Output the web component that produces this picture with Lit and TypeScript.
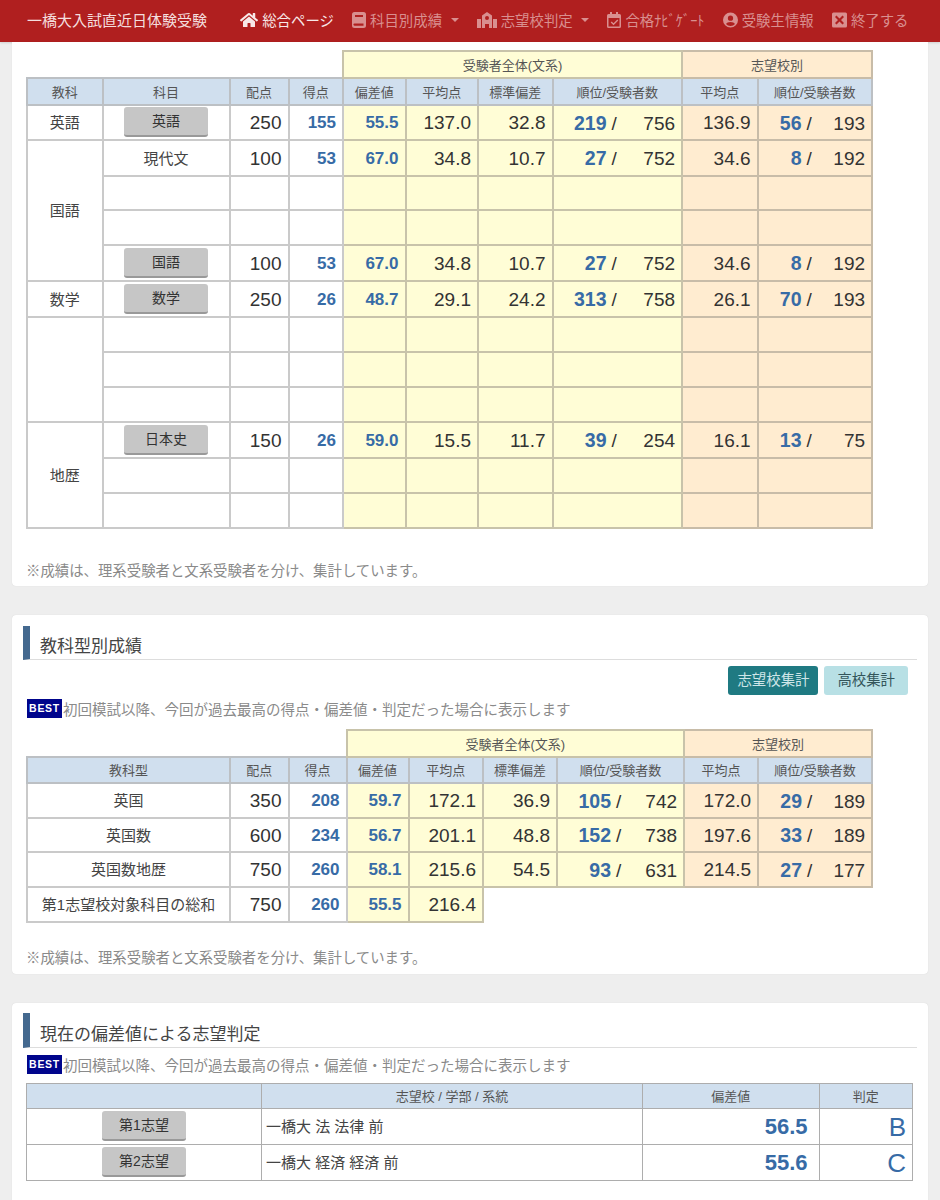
import { LitElement, html, css, svg } from "lit";
import { customElement } from "lit/decorators.js";

type Rank = [string, string];
interface Row {
  name?: string;
  btn?: boolean;
  vals?: (string | Rank)[];
  h: number;
}

const icons = {
  home: svg`<svg class="ic" style="width:18px" viewBox="0 0 576 512"><path fill="currentColor" d="M280 148 96 300v164a16 16 0 0 0 16 16l112-.3a16 16 0 0 0 16-16V368a16 16 0 0 1 16-16h64a16 16 0 0 1 16 16v95.6a16 16 0 0 0 16 16l112 .4a16 16 0 0 0 16-16V300L296 148a12 12 0 0 0-16 0zM572 251l-84-69V44a12 12 0 0 0-12-12h-56a12 12 0 0 0-12 12v72l-90-74a48 48 0 0 0-61 0L4 251a12 12 0 0 0-2 17l26 31a12 12 0 0 0 17 2L280 107a12 12 0 0 1 16 0l235 194a12 12 0 0 0 17-2l26-31a12 12 0 0 0-2-17z"/></svg>`,
  book: svg`<svg class="ic" style="width:14px" viewBox="0 0 14 16"><path fill="currentColor" fill-rule="evenodd" d="M2.5 0h9A2.5 2.5 0 0 1 14 2.500v11a2.500 2.500 0 0 1-2.500 2.500h-9A2.500 2.500 0 0 1 0 13.500v-11A2.500 2.500 0 0 1 2.500 0zM3 3v2h8V3zm-.5 8.500a1 1 0 0 0 0 2.200h9v-2.200z"/></svg>`,
  school: svg`<svg class="ic" style="width:20px" viewBox="0 0 20 16"><path fill="currentColor" fill-rule="evenodd" d="M10 0l5 3.500V16h-3v-4H8v4H5V3.500zm0 4a2 2 0 1 0 0 4 2 2 0 0 0 0-4zM0 7h4v9H0zm16 0h4v9h-4z"/></svg>`,
  cal: svg`<svg class="ic" style="width:14px" viewBox="0 0 14 16"><path fill="currentColor" fill-rule="evenodd" d="M3 0h2v2h4V0h2v2h1.500A1.500 1.500 0 0 1 14 3.500v11a1.500 1.500 0 0 1-1.500 1.500h-11A1.500 1.500 0 0 1 0 14.500v-11A1.500 1.500 0 0 1 1.500 2H3zM1.500 6v8.500h11V6zm8.800 1.500 1 1-4.800 4.800-2.800-2.800 1-1 1.800 1.800z"/></svg>`,
  user: svg`<svg class="ic" style="width:15px" viewBox="0 0 16 16"><path fill="currentColor" fill-rule="evenodd" d="M8 0a8 8 0 1 1 0 16A8 8 0 0 1 8 0zm0 3.200a2.800 2.800 0 1 0 0 5.600 2.800 2.800 0 0 0 0-5.600zM3.200 12.300A6 6 0 0 0 8 14.500a6 6 0 0 0 4.800-2.200C12 10.800 10.500 10 8 10s-4 .8-4.800 2.300z"/></svg>`,
  close: svg`<svg class="ic" style="width:15px" viewBox="0 0 15 15"><path fill="currentColor" fill-rule="evenodd" d="M1.500 0h12A1.500 1.500 0 0 1 15 1.500v12a1.500 1.500 0 0 1-1.500 1.500h-12A1.500 1.500 0 0 1 0 13.500v-12A1.500 1.500 0 0 1 1.500 0zm3 3L3 4.500l3 3-3 3L4.500 12l3-3 3 3 1.500-1.500-3-3 3-3L10.500 3l-3 3z"/></svg>`,
};

const t1Cols = [75.5, 127, 59, 54.5, 62.5, 72.5, 74.5, 129.5, 75.5, 114.5];
const t2Cols = [203, 58.5, 58, 62, 74.5, 74, 127, 74, 114];
const t3Cols = [235, 381, 176.5, 93.5];

@customElement("app-root")
export class AppRoot extends LitElement {
  static styles = css`
    :host {
      display: block;
      height: 1200px;
      overflow: hidden;
      background: #eee;
      font-family: "Liberation Sans", "Noto Sans CJK JP", sans-serif;
      color: #444;
    }
    .nav {
      height: 42px;
      box-sizing: border-box;
      padding: 0 0 3px 27px;
      background: #b01f1f;
      display: flex;
      align-items: center;
      gap: 18.2px;
      font-size: 14.4px;
      color: #d98f8f;
      white-space: nowrap;
      box-shadow: 0 1px 2px rgba(0, 0, 0, 0.12);
    }
    .brand {
      font-size: 15px;
      color: #f4dede;
      margin-right: 15px;
    }
    .item {
      display: flex;
      align-items: center;
      gap: 4px;
    }
    .item.on {
      color: #f8e8e8;
    }
    .ic {
      display: block;
      height: 16px;
    }
    .caret {
      width: 0;
      height: 0;
      margin-left: 4.5px;
      border-left: 4px solid transparent;
      border-right: 4px solid transparent;
      border-top: 4px solid currentColor;
    }
    .card {
      margin: 0 12px 29px;
      background: #fff;
      border-radius: 4px;
      padding: 10px 11px 0;
      box-shadow: 0 0 1px rgba(0, 0, 0, 0.15);
      box-sizing: border-box;
    }
    .card.first {
      padding-top: 8px;
      border-radius: 0 0 4px 4px;
      height: 544px;
    }
    .card.second {
      height: 359px;
      padding-top: 11px;
    }
    .card.third {
      height: 300px;
      margin-bottom: 0;
    }
    .sec {
      height: 34px;
      box-sizing: border-box;
      border-left: 7px solid #44698f;
      border-bottom: 1px solid #ddd;
      padding-left: 10px;
      font-size: 17px;
      line-height: 42px;
      color: #444;
    }
    .third .sec {
      height: 35px;
      line-height: 44px;
    }
    .tabs {
      display: flex;
      justify-content: flex-end;
      gap: 6px;
      margin: 6px 9px 0 0;
    }
    .tab {
      height: 29px;
      line-height: 29px;
      padding: 0 9px;
      border-radius: 3px;
      font-size: 14.4px;
    }
    .tab.a {
      background: #1f7a82;
      color: #cfe6e8;
    }
    .tab.b {
      padding: 0 13px;
      background: #b8e0e5;
      color: #33555a;
    }
    .best {
      display: flex;
      align-items: center;
      height: 19px;
      margin: 4px 0 0 4px;
      font-size: 14.5px;
      color: #8a8a8a;
      white-space: nowrap;
    }
    .third .best {
      margin-top: 7px;
    }
    .badge {
      width: 35px;
      height: 19px;
      line-height: 19px;
      text-align: center;
      background: #00058c;
      color: #fff;
      font-size: 10.5px;
      font-weight: 700;
      letter-spacing: 0.7px;
      margin-right: 1px;
    }
    table {
      border-collapse: collapse;
      table-layout: fixed;
      margin-left: 3px;
    }
    .t2 {
      margin-top: 11px;
    }
    .t3 {
      margin-top: 9px;
    }
    th {
      font-weight: 400;
      font-size: 13px;
      color: #555;
      background: #d0dfee;
      border: 2px solid #bcc0c4;
      padding: 0 0 1px;
    }
    th.blank {
      background: none;
      border: none;
    }
    th.gy,
    td.gy {
      background: #fffdd6;
      border-color: #c8c3aa;
    }
    th.go,
    td.go {
      background: #ffecd0;
      border-color: #c8bca8;
    }
    td {
      border: 2px solid #cacaca;
      padding: 1px 6px 0;
      font-size: 19px;
      text-align: right;
      color: #333;
      white-space: nowrap;
    }
    td.c {
      text-align: center;
      font-size: 15px;
      color: #444;
      padding: 0 6px 2px;
    }
    td.l {
      text-align: left;
      font-size: 15px;
      color: #444;
      padding: 0 0 2px 4px;
    }
    .blue {
      color: #376ba6;
      font-weight: 700;
    }
    td.s {
      font-size: 17px;
      padding-top: 1px;
      padding-bottom: 0;
    }
    td.big {
      font-size: 22px;
      padding-right: 11px;
    }
    td.grade {
      font-size: 26px;
      color: #376ba6;
    }
    .t3 th,
    .t3 td {
      border-width: 1px;
      border-color: #adadad;
    }
    .btn {
      display: block;
      width: 84px;
      height: 30px;
      box-sizing: border-box;
      margin: 1px auto 0;
      background: #c6c6c6;
      border-bottom: 2px solid #999;
      border-radius: 3px;
      font-size: 14px;
      line-height: 29px;
      color: #333;
      text-align: center;
    }
    .rank {
      display: flex;
      align-items: baseline;
    }
    .rank .n {
      flex: none;
      text-align: right;
      font-size: 19.5px;
    }
    .rank .sl {
      margin-left: 5px;
    }
    .rank .tot {
      flex: 1;
      text-align: right;
    }
    .note {
      font-size: 14.4px;
      color: #8a8a8a;
      margin-left: 3px;
      white-space: nowrap;
    }
    .first .note {
      margin-top: 30px;
    }
    .second .note {
      margin-top: 23px;
    }
  `;

  private colgroup(cols: number[]) {
    return html`<colgroup>
      ${cols.map((w) => html`<col style="width:${w}px" />`)}
    </colgroup>`;
  }

  private rank(r: Rank, cls: string, w: number) {
    return html`<td class=${cls}>
      <div class="rank">
        <span class="n blue" style="width:${w}px">${r[0]}</span><span class="sl">/</span
        ><span class="tot">${r[1]}</span>
      </div>
    </td>`;
  }

  private row1(r: Row, subjCell: unknown) {
    const v = r.vals;
    const nameCell = r.btn
      ? html`<td class="c"><span class="btn">${r.name}</span></td>`
      : html`<td class="c">${r.name ?? ""}</td>`;
    return html`<tr style="height:${r.h}px">
      ${subjCell} ${nameCell}
      ${v
        ? html`<td>${v[0]}</td>
            <td class="s blue">${v[1]}</td>
            <td class="gy s blue">${v[2]}</td>
            <td class="gy">${v[3]}</td>
            <td class="gy">${v[4]}</td>
            ${this.rank(v[5] as Rank, "gy", 47)}
            <td class="go">${v[6]}</td>
            ${this.rank(v[7] as Rank, "go", 37)}`
        : html`<td></td>
            <td></td>
            <td class="gy"></td>
            <td class="gy"></td>
            <td class="gy"></td>
            <td class="gy"></td>
            <td class="go"></td>
            <td class="go"></td>`}
    </tr>`;
  }

  private table1() {
    const s = (t: string, span = 1) => html`<td class="c" rowspan=${span}>${t}</td>`;
    return html`<table style="width:845px">
      ${this.colgroup(t1Cols)}
      <tr style="height:27px">
        <th class="blank" colspan="4"></th>
        <th class="gy" colspan="4">受験者全体(文系)</th>
        <th class="go" colspan="2">志望校別</th>
      </tr>
      <tr style="height:27px">
        ${["教科", "科目", "配点", "得点", "偏差値", "平均点", "標準偏差", "順位/受験者数", "平均点", "順位/受験者数"].map(
          (t) => html`<th>${t}</th>`
        )}
      </tr>
      ${this.row1(
        { name: "英語", btn: true, h: 35, vals: ["250", "155", "55.5", "137.0", "32.8", ["219", "756"], "136.9", ["56", "193"]] },
        s("英語")
      )}
      ${this.row1(
        { name: "現代文", h: 36, vals: ["100", "53", "67.0", "34.8", "10.7", ["27", "752"], "34.6", ["8", "192"]] },
        s("国語", 4)
      )}
      ${this.row1({ h: 34 }, "")} ${this.row1({ h: 35 }, "")}
      ${this.row1(
        { name: "国語", btn: true, h: 36, vals: ["100", "53", "67.0", "34.8", "10.7", ["27", "752"], "34.6", ["8", "192"]] },
        ""
      )}
      ${this.row1(
        { name: "数学", btn: true, h: 36, vals: ["250", "26", "48.7", "29.1", "24.2", ["313", "758"], "26.1", ["70", "193"]] },
        s("数学")
      )}
      ${this.row1({ h: 35 }, s("", 3))} ${this.row1({ h: 35 }, "")} ${this.row1({ h: 35 }, "")}
      ${this.row1(
        { name: "日本史", btn: true, h: 36, vals: ["150", "26", "59.0", "15.5", "11.7", ["39", "254"], "16.1", ["13", "75"]] },
        s("地歴", 3)
      )}
      ${this.row1({ h: 35 }, "")} ${this.row1({ h: 35 }, "")}
    </table>`;
  }

  private table2() {
    const rows: [string, string, string, string, string, string, Rank, string, Rank, number][] = [
      ["英国", "350", "208", "59.7", "172.1", "36.9", ["105", "742"], "172.0", ["29", "189"], 35],
      ["英国数", "600", "234", "56.7", "201.1", "48.8", ["152", "738"], "197.6", ["33", "189"], 34],
      ["英国数地歴", "750", "260", "58.1", "215.6", "54.5", ["93", "631"], "214.5", ["27", "177"], 35],
    ];
    return html`<table class="t2" style="width:845px">
      ${this.colgroup(t2Cols)}
      <tr style="height:27px">
        <th class="blank" colspan="3"></th>
        <th class="gy" colspan="4">受験者全体(文系)</th>
        <th class="go" colspan="2">志望校別</th>
      </tr>
      <tr style="height:26px">
        ${["教科型", "配点", "得点", "偏差値", "平均点", "標準偏差", "順位/受験者数", "平均点", "順位/受験者数"].map(
          (t) => html`<th>${t}</th>`
        )}
      </tr>
      ${rows.map(
        (r) => html`<tr style="height:${r[9]}px">
          <td class="c">${r[0]}</td>
          <td>${r[1]}</td>
          <td class="s blue">${r[2]}</td>
          <td class="gy s blue">${r[3]}</td>
          <td class="gy">${r[4]}</td>
          <td class="gy">${r[5]}</td>
          ${this.rank(r[6], "gy", 47)}
          <td class="go">${r[7]}</td>
          ${this.rank(r[8], "go", 37)}
        </tr>`
      )}
      <tr style="height:35px">
        <td class="c">第1志望校対象科目の総和</td>
        <td>750</td>
        <td class="s blue">260</td>
        <td class="gy s blue">55.5</td>
        <td class="gy">216.4</td>
      </tr>
    </table>`;
  }

  private table3() {
    const rows = [
      ["第1志望", "一橋大 法 法律 前", "56.5", "B"],
      ["第2志望", "一橋大 経済 経済 前", "55.6", "C"],
    ];
    return html`<table class="t3" style="width:886px">
      ${this.colgroup(t3Cols)}
      <tr style="height:25px">
        <th></th>
        <th>志望校 / 学部 / 系統</th>
        <th>偏差値</th>
        <th>判定</th>
      </tr>
      ${rows.map(
        (r) => html`<tr style="height:36px">
          <td class="c"><span class="btn">${r[0]}</span></td>
          <td class="l">${r[1]}</td>
          <td class="big blue">${r[2]}</td>
          <td class="grade">${r[3]}</td>
        </tr>`
      )}
    </table>`;
  }

  render() {
    const bestText = "初回模試以降、今回が過去最高の得点・偏差値・判定だった場合に表示します";
    const note = "※成績は、理系受験者と文系受験者を分け、集計しています。";
    return html`
      <div class="nav">
        <div class="brand">一橋大入試直近日体験受験</div>
        <div class="item on">${icons.home}<span>総合ページ</span></div>
        <div class="item">${icons.book}<span>科目別成績</span><i class="caret"></i></div>
        <div class="item">${icons.school}<span>志望校判定</span><i class="caret"></i></div>
        <div class="item">${icons.cal}<span>合格ﾅﾋﾞｹﾞｰﾄ</span></div>
        <div class="item">${icons.user}<span>受験生情報</span></div>
        <div class="item">${icons.close}<span>終了する</span></div>
      </div>
      <div class="card first">
        ${this.table1()}
        <div class="note">${note}</div>
      </div>
      <div class="card second">
        <div class="sec">教科型別成績</div>
        <div class="tabs">
          <div class="tab a">志望校集計</div>
          <div class="tab b">高校集計</div>
        </div>
        <div class="best"><span class="badge">BEST</span>${bestText}</div>
        ${this.table2()}
        <div class="note">${note}</div>
      </div>
      <div class="card third">
        <div class="sec">現在の偏差値による志望判定</div>
        <div class="best"><span class="badge">BEST</span>${bestText}</div>
        ${this.table3()}
      </div>
    `;
  }
}
